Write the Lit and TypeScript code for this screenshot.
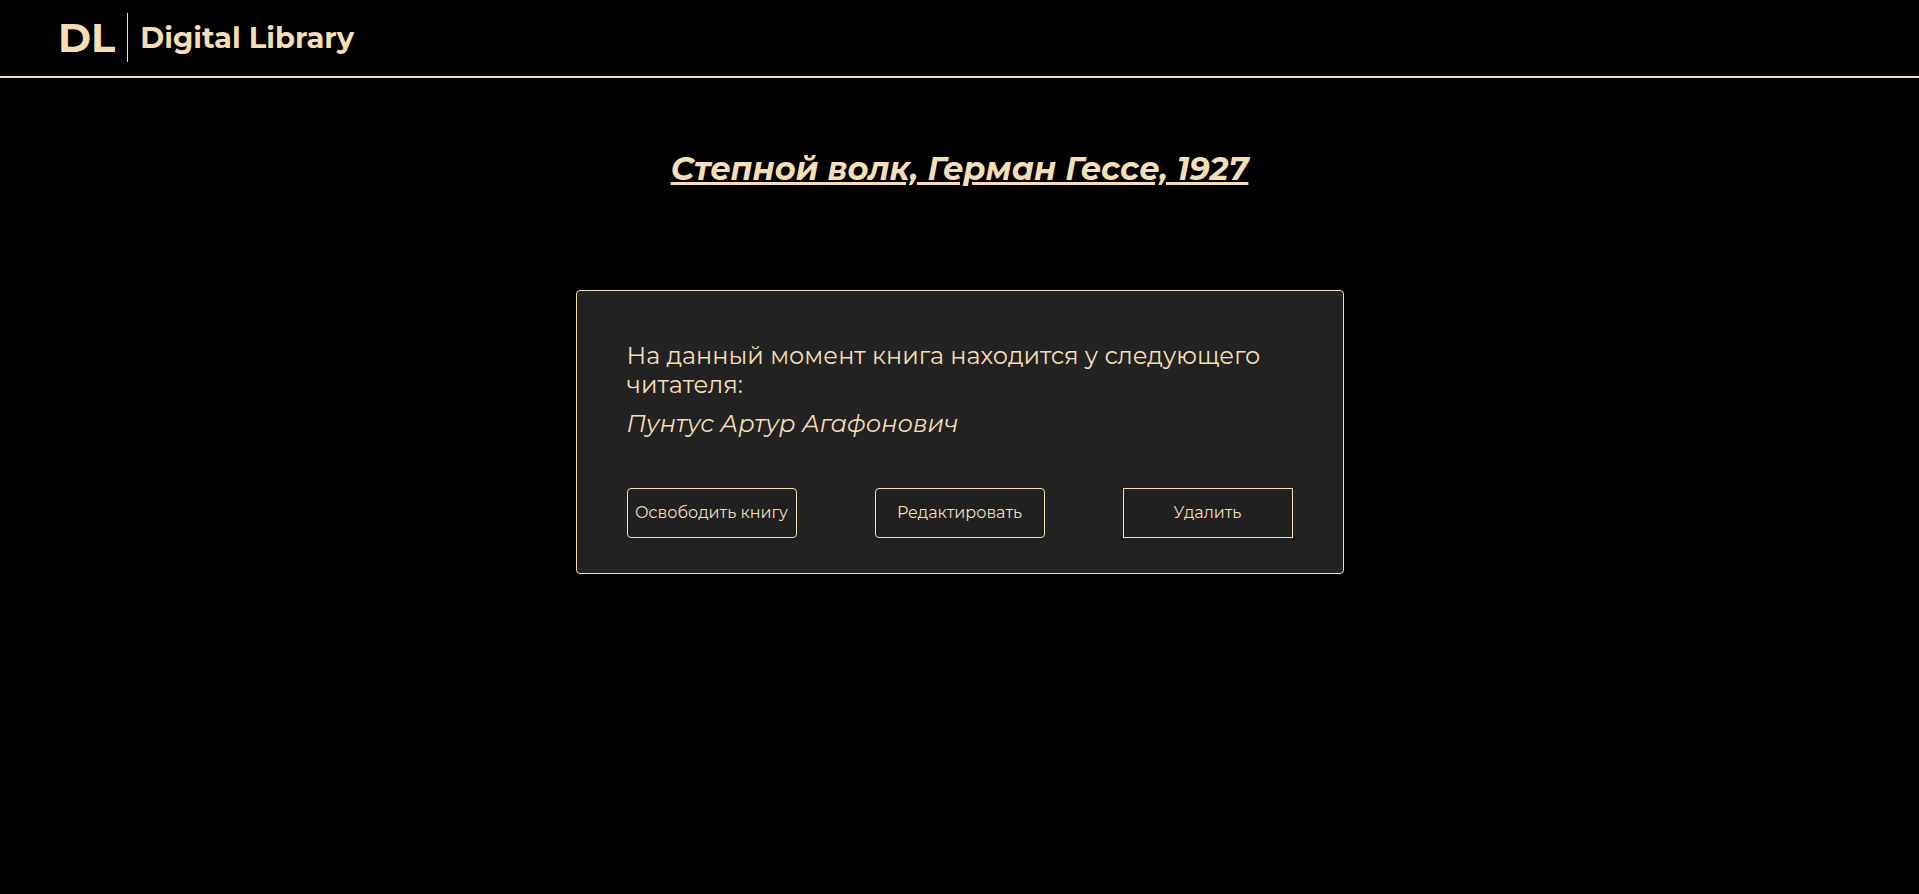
import { LitElement, html, css } from "lit";
import { customElement, property } from "lit/decorators.js";

@customElement("library-header")
class LibraryHeader extends LitElement {
  static styles = css`
    :host {
      display: block;
    }
    .bar {
      display: flex;
      align-items: center;
      box-sizing: border-box;
      padding: 13px 58px 14px;
      border-bottom: 2px solid wheat;
    }
    .brand {
      display: flex;
      align-items: center;
      color: wheat;
      font-weight: 700;
      text-decoration: none;
    }
    .mark {
      padding-right: 12px;
      font-size: 40px;
      line-height: 49px;
      border-right: 1px solid wheat;
    }
    .name {
      padding-left: 12px;
      font-size: 29px;
      line-height: 49px;
    }
  `;

  render() {
    return html`
      <header class="bar">
        <a class="brand" href="#">
          <span class="mark">DL</span>
          <span class="name">Digital Library</span>
        </a>
      </header>
    `;
  }
}

@customElement("book-card")
class BookCard extends LitElement {
  @property() reader = "";

  static styles = css`
    :host {
      display: block;
      box-sizing: border-box;
      width: 100%;
      max-width: 768px;
      padding: 50px 50px 35px;
      border: 1px solid wheat;
      border-radius: 4px;
      background: #222222;
    }
    .text {
      margin: 0 0 10px;
      font-size: 24px;
      line-height: 29px;
    }
    .reader {
      margin: 0 0 50px;
      font-size: 24px;
      line-height: 29px;
      font-style: italic;
    }
    .actions {
      display: flex;
      justify-content: space-between;
    }
    .button {
      box-sizing: border-box;
      width: 170px;
      height: 50px;
      padding: 0 0 2px;
      border: 1px solid wheat;
      border-radius: 4px;
      background: #202020;
      color: wheat;
      font-family: inherit;
      font-size: 16px;
      white-space: nowrap;
      cursor: pointer;
    }
    .square {
      border-radius: 0;
    }
  `;

  render() {
    return html`
      <p class="text">На данный момент книга находится у следующего читателя:</p>
      <p class="reader">${this.reader}</p>
      <div class="actions">
        <button class="button" type="button">Освободить книгу</button>
        <button class="button" type="button">Редактировать</button>
        <button class="button square" type="button">Удалить</button>
      </div>
    `;
  }
}

@customElement("app-root")
class AppRoot extends LitElement {
  static styles = css`
    :host {
      display: block;
      min-height: 100vh;
      background: #000000;
      color: wheat;
      font-family: Montserrat, Inter, "Open Sans", sans-serif;
    }
    .page {
      display: flex;
      flex-direction: column;
      align-items: center;
      gap: 102px;
      padding: 71px 0 50px;
    }
    .title {
      margin: 0;
      font-size: 32px;
      line-height: 39px;
      font-weight: 700;
      font-style: italic;
      text-decoration: underline;
    }
  `;

  render() {
    return html`
      <library-header></library-header>
      <main class="page">
        <h1 class="title">Степной волк, Герман Гессе, 1927</h1>
        <book-card reader="Пунтус Артур Агафонович"></book-card>
      </main>
    `;
  }
}
